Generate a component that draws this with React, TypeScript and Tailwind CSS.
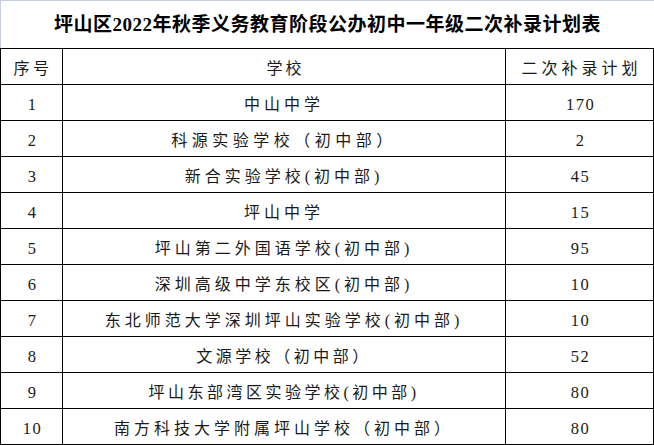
const rows: { no: string; school: string; plan: string; track: string }[] = [
  { no: "1", school: "中山中学", plan: "170", track: "tracking-[4px]" },
  { no: "2", school: "科源实验学校（初中部）", plan: "2", track: "tracking-[4.5px]" },
  { no: "3", school: "新合实验学校(初中部)", plan: "45", track: "tracking-[4px]" },
  { no: "4", school: "坪山中学", plan: "15", track: "tracking-[4px]" },
  { no: "5", school: "坪山第二外国语学校(初中部)", plan: "95", track: "tracking-[4px]" },
  { no: "6", school: "深圳高级中学东校区(初中部)", plan: "10", track: "tracking-[4px]" },
  { no: "7", school: "东北师范大学深圳坪山实验学校(初中部)", plan: "10", track: "tracking-[4px]" },
  { no: "8", school: "文源学校（初中部）", plan: "52", track: "tracking-[3.5px]" },
  { no: "9", school: "坪山东部湾区实验学校(初中部)", plan: "80", track: "tracking-[3.5px]" },
  { no: "10", school: "南方科技大学附属坪山学校（初中部）", plan: "80", track: "tracking-[4px]" },
]

const cell = "h-[36px] border-r border-b border-black flex items-center justify-center pt-[5px]"

export default function App() {
  return (
    <div className="w-[654px] h-[445px] bg-white overflow-hidden font-['Liberation_Serif','Noto_Sans_CJK_SC',serif] text-[#1a1a1a]">
      {/* Title */}
      <div className="h-[48px] border-t border-l border-[#c7cde2] flex items-center justify-center pt-[2px]">
        <h1 className="text-[19px] font-bold text-black tracking-[0.5px]">
          坪山区2022年秋季义务教育阶段公办初中一年级二次补录计划表
        </h1>
      </div>

      {/* Table */}
      <div className="grid grid-cols-[62px_443px_148px] border-l border-t border-black">
        <div className={`${cell} text-[16px] tracking-[3.5px] pl-[3px]`}>序号</div>
        <div className={`${cell} text-[16px] tracking-[3px] pl-[3px]`}>学校</div>
        <div className={`${cell} text-[16px] tracking-[4px] pl-[4px]`}>二次补录计划</div>

        {rows.map((r) => (
          <div key={r.no} className="contents">
            <div className={`${cell} text-[16.5px] tracking-[1.5px] pl-[2px]`}>{r.no}</div>
            <div className={`${cell} text-[16px] ${r.track}`}>{r.school}</div>
            <div className={`${cell} text-[16.5px] tracking-[1.5px] pl-[2px]`}>{r.plan}</div>
          </div>
        ))}
      </div>
    </div>
  )
}
